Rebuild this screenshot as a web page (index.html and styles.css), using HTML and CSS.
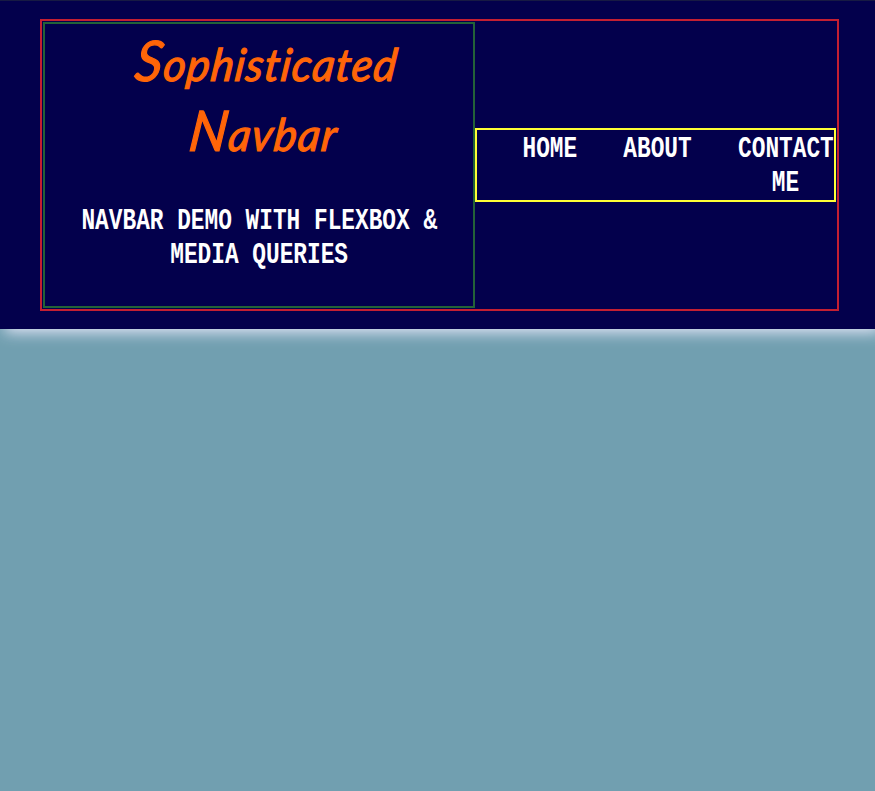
FILE: index.html
```html
<!DOCTYPE html>
<html lang="en">
<head>
<meta charset="utf-8">
<title>Sophisticated Navbar</title>
<link rel="stylesheet" href="styles.css">
</head>
<body>
<header class="header">
  <div class="container">
    <div class="brand">
      <h1 class="title"><span class="script first">Sophisticated</span><span class="script second">Navbar</span></h1>
      <p class="tagline"><span class="line"><span class="term">NAVBAR DEMO WITH FLEXBOX &amp;</span></span><span class="line"><span class="term">MEDIA QUERIES</span></span></p>
    </div>
    <nav class="nav">
      <a class="item home"><span class="line"><span class="term">HOME</span></span></a>
      <a class="item about"><span class="line"><span class="term">ABOUT</span></span></a>
      <a class="item contact"><span class="line"><span class="term">CONTACT</span></span><span class="line"><span class="term">ME</span></span></a>
    </nav>
  </div>
</header>
</body>
</html>
```
FILE: styles.css
```css
* { box-sizing: border-box; }
body { margin: 0; min-height: 100vh; background: #719fb0; overflow-x: hidden; }
.header {
  height: 329px;
  padding: 19px 36px 18px 40px;
  background: #03004c;
  box-shadow: 5px 3px 14px 0 #e8e8fa, inset 0 1px #171a43;
}
.container {
  display: flex;
  align-items: center;
  height: 292px;
  border: 2px solid #c41f32;
  padding: 1px;
}
.brand {
  width: 432px;
  height: 286px;
  border: 2px solid #236238;
  padding-top: 1px;
}
.title {
  margin: 0;
  font: italic 400 45px/70px Lato, sans-serif;
  font-variant-ligatures: none;
  color: #ff6508;
  -webkit-text-stroke: 1.2px #ff6508;
  stroke-linejoin: round;
}
.script {
  display: block;
  width: max-content;
  height: 70px;
  transform-origin: left center;
  white-space: nowrap;
}
.script::first-letter { font-size: 56px; }
.first { margin-left: 91px; letter-spacing: 1.2px; transform: skewX(-7deg) scaleX(.96); }
.second { margin-left: 145px; letter-spacing: 1.4px; transform: skewX(-7deg) scaleX(.96); }
.tagline { margin: 40px 0 0; }
.line { display: flex; justify-content: center; height: 34px; }
.term {
  flex: none;
  font: 700 29px/34px "Liberation Mono", monospace;
  color: #fff;
  white-space: pre;
  transform: scaleX(.786);
}
.nav {
  display: flex;
  width: 361px;
  height: 74px;
  border: 2px solid #ffff35;
  padding-top: 3px;
}
.item { margin-left: 46px; }
.home { width: 54px; }
.about { width: 69px; }
.contact { width: 95px; }
```
